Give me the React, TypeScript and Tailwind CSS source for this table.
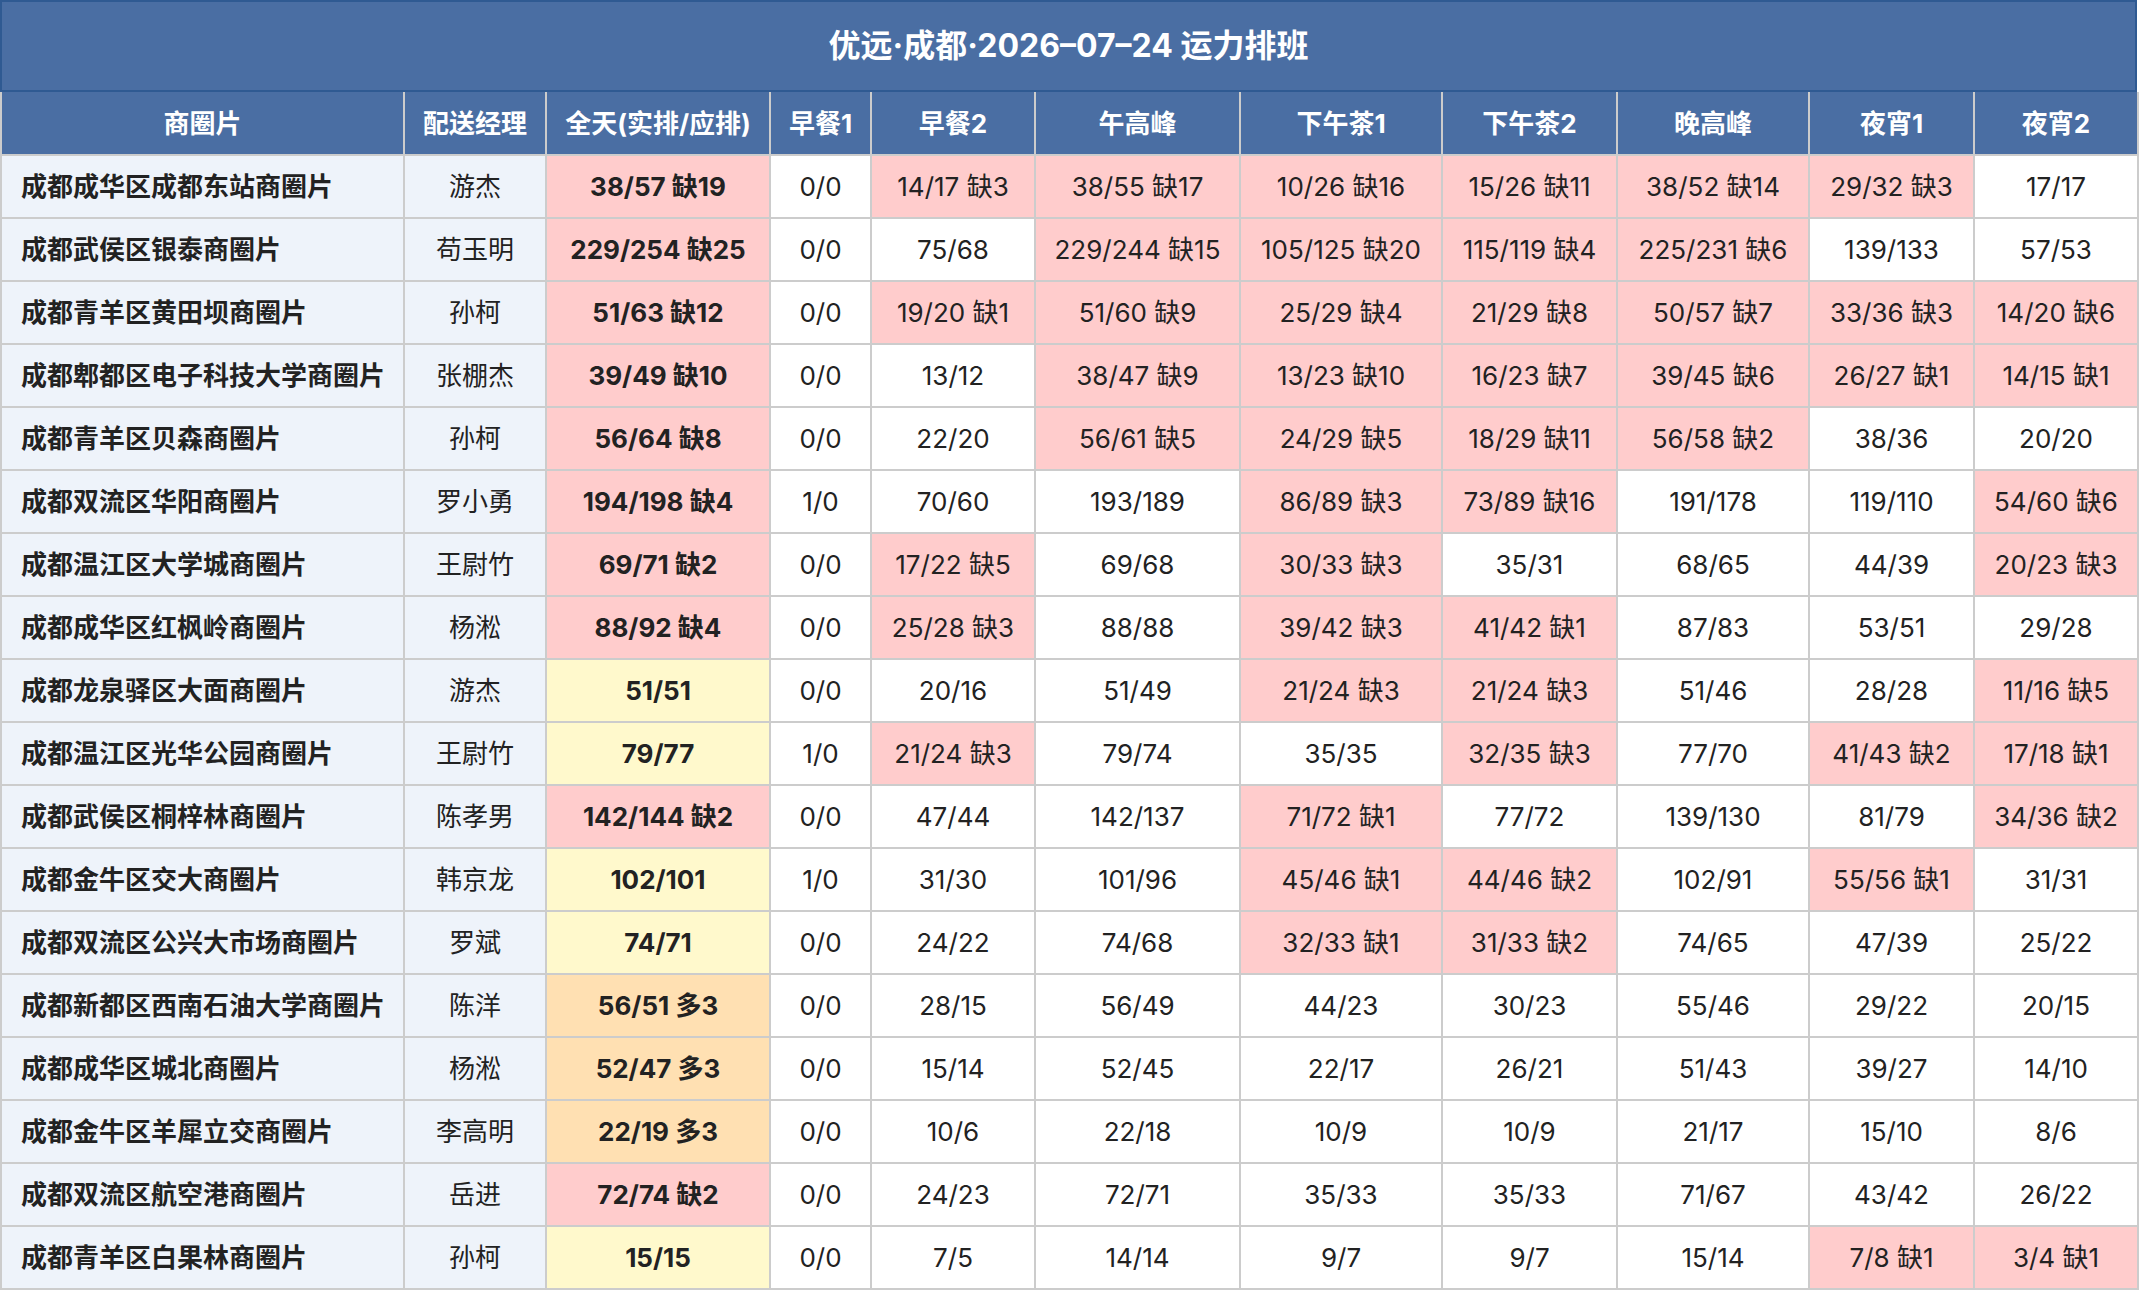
import React from "react";

type Row = [string, string, string, ...string[]];

const rows: Row[] = [
  ["成都成华区成都东站商圈片", "游杰", "38/57 缺19", "0/0", "14/17 缺3", "38/55 缺17", "10/26 缺16", "15/26 缺11", "38/52 缺14", "29/32 缺3", "17/17"],
  ["成都武侯区银泰商圈片", "苟玉明", "229/254 缺25", "0/0", "75/68", "229/244 缺15", "105/125 缺20", "115/119 缺4", "225/231 缺6", "139/133", "57/53"],
  ["成都青羊区黄田坝商圈片", "孙柯", "51/63 缺12", "0/0", "19/20 缺1", "51/60 缺9", "25/29 缺4", "21/29 缺8", "50/57 缺7", "33/36 缺3", "14/20 缺6"],
  ["成都郫都区电子科技大学商圈片", "张棚杰", "39/49 缺10", "0/0", "13/12", "38/47 缺9", "13/23 缺10", "16/23 缺7", "39/45 缺6", "26/27 缺1", "14/15 缺1"],
  ["成都青羊区贝森商圈片", "孙柯", "56/64 缺8", "0/0", "22/20", "56/61 缺5", "24/29 缺5", "18/29 缺11", "56/58 缺2", "38/36", "20/20"],
  ["成都双流区华阳商圈片", "罗小勇", "194/198 缺4", "1/0", "70/60", "193/189", "86/89 缺3", "73/89 缺16", "191/178", "119/110", "54/60 缺6"],
  ["成都温江区大学城商圈片", "王尉竹", "69/71 缺2", "0/0", "17/22 缺5", "69/68", "30/33 缺3", "35/31", "68/65", "44/39", "20/23 缺3"],
  ["成都成华区红枫岭商圈片", "杨淞", "88/92 缺4", "0/0", "25/28 缺3", "88/88", "39/42 缺3", "41/42 缺1", "87/83", "53/51", "29/28"],
  ["成都龙泉驿区大面商圈片", "游杰", "51/51", "0/0", "20/16", "51/49", "21/24 缺3", "21/24 缺3", "51/46", "28/28", "11/16 缺5"],
  ["成都温江区光华公园商圈片", "王尉竹", "79/77", "1/0", "21/24 缺3", "79/74", "35/35", "32/35 缺3", "77/70", "41/43 缺2", "17/18 缺1"],
  ["成都武侯区桐梓林商圈片", "陈孝男", "142/144 缺2", "0/0", "47/44", "142/137", "71/72 缺1", "77/72", "139/130", "81/79", "34/36 缺2"],
  ["成都金牛区交大商圈片", "韩京龙", "102/101", "1/0", "31/30", "101/96", "45/46 缺1", "44/46 缺2", "102/91", "55/56 缺1", "31/31"],
  ["成都双流区公兴大市场商圈片", "罗斌", "74/71", "0/0", "24/22", "74/68", "32/33 缺1", "31/33 缺2", "74/65", "47/39", "25/22"],
  ["成都新都区西南石油大学商圈片", "陈洋", "56/51 多3", "0/0", "28/15", "56/49", "44/23", "30/23", "55/46", "29/22", "20/15"],
  ["成都成华区城北商圈片", "杨淞", "52/47 多3", "0/0", "15/14", "52/45", "22/17", "26/21", "51/43", "39/27", "14/10"],
  ["成都金牛区羊犀立交商圈片", "李高明", "22/19 多3", "0/0", "10/6", "22/18", "10/9", "10/9", "21/17", "15/10", "8/6"],
  ["成都双流区航空港商圈片", "岳进", "72/74 缺2", "0/0", "24/23", "72/71", "35/33", "35/33", "71/67", "43/42", "26/22"],
  ["成都青羊区白果林商圈片", "孙柯", "15/15", "0/0", "7/5", "14/14", "9/7", "9/7", "15/14", "7/8 缺1", "3/4 缺1"],
];

const headers = ["商圈片", "配送经理", "全天(实排/应排)", "早餐1", "早餐2", "午高峰", "下午茶1", "下午茶2", "晚高峰", "夜宵1", "夜宵2"];
const widths = [403, 142, 224, 101, 164, 205, 202, 175, 192, 165, 164];

function dayBg(v: string) {
  if (v.includes("缺")) return "bg-[#ffcccc]";
  if (v.includes("多")) return "bg-[#ffe0b2]";
  return "bg-[#fff9cc]";
}

function slotBg(v: string) {
  return v.includes("缺") ? "bg-[#ffcccc]" : "bg-white";
}

export default function App() {
  return (
    <div
      className="w-[2137px] bg-white text-[#222222]"
      style={{ fontFamily: 'Inter, "Noto Sans CJK SC", sans-serif' }}
    >
      <div className="h-[92px] flex items-center justify-center bg-[#4a6ea3] border-2 border-[#2f5a92] text-white text-[32px] font-bold">
        优远·成都·2026–07–24 运力排班
      </div>
      <table className="table-fixed border-collapse w-[2137px]">
        <colgroup>
          {widths.map((w, i) => (
            <col key={i} style={{ width: w }} />
          ))}
        </colgroup>
        <thead>
          <tr className="h-[63px]">
            {headers.map((h, i) => (
              <th
                key={i}
                className="bg-[#4a6ea3] text-white font-bold text-[26px] text-center border-2 border-t-0 border-[#cccccc] p-0"
              >
                {h}
              </th>
            ))}
          </tr>
        </thead>
        <tbody>
          {rows.map((r, ri) => (
            <tr key={ri} className="h-[63px]">
              {r.map((c, ci) => {
                let cls = "border-2 border-[#cccccc] text-[26px] p-0 whitespace-nowrap ";
                if (ci === 0) cls += "bg-[#eef3fa] font-bold text-left pl-[19px]";
                else if (ci === 1) cls += "bg-[#eef3fa] text-center";
                else if (ci === 2) cls += dayBg(c) + " font-bold text-center";
                else cls += slotBg(c) + " text-center";
                return (
                  <td key={ci} className={cls}>
                    {c}
                  </td>
                );
              })}
            </tr>
          ))}
        </tbody>
      </table>
    </div>
  );
}
